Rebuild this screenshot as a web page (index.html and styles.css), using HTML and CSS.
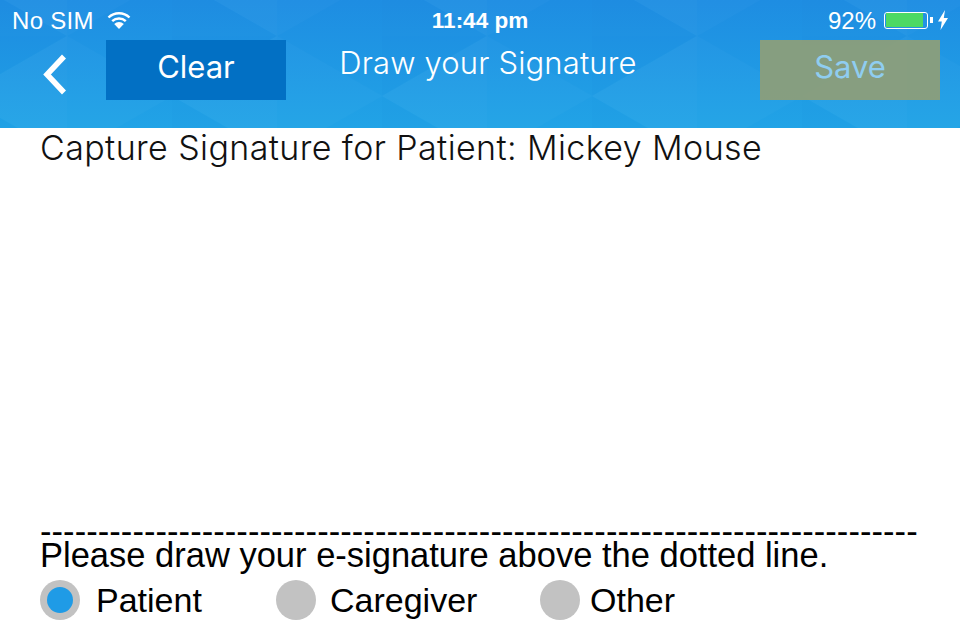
FILE: index.html
```html
<!DOCTYPE html>
<html lang="en">
<head>
	<meta charset="UTF-8">
	<title>Draw your Signature</title>
	<link rel="stylesheet" href="styles.css">
</head>
<body>
	<div id="container">
		<div class="header">
			<svg class="pattern" width="960" height="128" viewBox="0 0 960 128">
				<defs>
					<pattern id="tri" width="210" height="120" patternUnits="userSpaceOnUse" patternTransform="translate(-38 36)">
						<polygon points="105,0 105,120 0,60" fill="#fff" opacity=".03"/>
						<polygon points="105,0 210,60 105,120" fill="#fff" opacity=".018"/>
						<polygon points="0,0 105,0 0,60" fill="#0a5fc0" opacity=".03"/>
						<polygon points="0,60 105,120 0,120" fill="#0a5fc0" opacity=".015"/>
					</pattern>
				</defs>
				<rect width="960" height="128" fill="url(#tri)"/>
			</svg>
			<div class="status">
				<div class="status-left">
					<span class="carrier">No SIM</span>
					<svg class="wifi" width="24" height="18" viewBox="0 0 24 18">
						<path d="M1.500 6.500a15 15 0 0 1 21 0M5.200 10.200a9.800 9.800 0 0 1 13.600 0" fill="none" stroke="#fff" stroke-width="2.400"/>
						<path d="M12 18L7.200 13a7 7 0 0 1 9.600 0z" fill="#fff"/>
					</svg>
				</div>
				<div class="time">11:44 pm</div>
				<div class="status-right">
					<span class="percent">92%</span>
					<div class="battery"><div class="battery-fill"></div></div>
					<div class="battery-nub"></div>
					<svg class="bolt" width="10" height="20" viewBox="0 0 10 20">
						<path d="M7 0L0 11.500h3.800L2.500 20 10 8H5.800z" fill="#fff"/>
					</svg>
				</div>
			</div>
			<div class="nav">
				<svg class="back" width="24" height="41" viewBox="0 0 24 41">
					<path d="M21 2.500L4 20.500l17 18" fill="none" stroke="#fff" stroke-width="5.500"/>
				</svg>
				<div class="btn btn-clear">Clear</div>
				<div class="title">Draw your Signature</div>
				<div class="btn btn-save">Save</div>
			</div>
		</div>
		<div class="content">
			<div class="caption">Capture Signature for Patient: Mickey Mouse</div>
			<div class="sign-area"></div>
			<div class="dots">----------------------------------------------------------------------------</div>
			<div class="hint">Please draw your e-signature above the dotted line.</div>
			<div class="radios">
				<div class="radio-item">
					<div class="radio on"></div>
					<span>Patient</span>
				</div>
				<div class="radio-item mid">
					<div class="radio"></div>
					<span>Caregiver</span>
				</div>
				<div class="radio-item last">
					<div class="radio"></div>
					<span>Other</span>
				</div>
			</div>
		</div>
	</div>
</body>
</html>
```

FILE: styles.css
```css
html, body {
	margin: 0;
	padding: 0;
	background: #fff;
}
#container {
	width: 960px;
	height: 640px;
	overflow: hidden;
	display: flex;
	flex-direction: column;
}
.header {
	position: relative;
	height: 128px;
	flex: none;
	color: #fff;
	background: linear-gradient(#1e8de2, #21a3e6);
	font-family: "Inter", "Liberation Sans", sans-serif;
}
.pattern {
	position: absolute;
	left: 0;
	top: 0;
}
.status {
	position: relative;
	height: 40px;
	display: grid;
	grid-template-columns: 1fr auto 1fr;
	align-items: center;
	padding: 0 12px;
	font-family: "Liberation Sans", sans-serif;
	font-size: 24px;
}
.status-left {
	display: flex;
	align-items: center;
	gap: 13px;
}
.carrier {
	padding-top: 2px;
	letter-spacing: 0.3px;
}
.wifi {
	display: block;
}
.time {
	padding-top: 2px;
	font-weight: bold;
	font-size: 22.500px;
}
.status-right {
	display: flex;
	align-items: center;
	justify-content: flex-end;
}
.percent {
	padding-top: 2px;
	margin-right: 8px;
}
.battery {
	width: 40px;
	height: 14px;
	padding: 0.500px 1px;
	border: 1.500px solid #fff;
	border-radius: 3px;
}
.battery-fill {
	width: 37px;
	height: 14px;
	background: #4cd964;
}
.battery-nub {
	width: 3px;
	height: 6px;
	margin-left: 2px;
	background: #fff;
}
.bolt {
	margin-left: 5px;
}
.nav {
	position: relative;
	height: 60px;
	display: flex;
	padding: 0 20px 0 43px;
}
.back {
	margin: 14px 39px 0 0;
}
.btn {
	width: 180px;
	height: 60px;
	line-height: 54px;
	text-align: center;
	font-size: 31px;
}
.btn-clear {
	background: #0270c4;
}
.btn-save {
	background: rgba(140, 158, 122, 0.95);
	color: #8fcdf0;
}
.title {
	flex: 1;
	padding-right: 70px;
	text-align: center;
	line-height: 46px;
	font-size: 31px;
	font-weight: 300;
	letter-spacing: 0.15px;
}
.content {
	flex: 1;
	display: flex;
	flex-direction: column;
	padding: 0 40px 20px;
	font-family: "Liberation Sans", sans-serif;
	color: #000;
}
.caption {
	font-family: "Inter", "Liberation Sans", sans-serif;
	font-weight: 300;
	font-size: 34px;
	line-height: 40px;
	letter-spacing: 0.4px;
	color: #111;
}
.sign-area {
	flex: 1;
}
.dots {
	font-size: 34.500px;
	line-height: 32px;
	height: 21px;
	letter-spacing: 0.06px;
	white-space: nowrap;
}
.hint {
	font-size: 34.500px;
	line-height: 38px;
}
.radios {
	display: grid;
	grid-template-columns: 236px 264px auto;
	margin-top: 6px;
}
.radio-item {
	display: flex;
	align-items: center;
	gap: 16px;
	font-size: 34px;
}
.radio-item.mid {
	gap: 14px;
}
.radio-item.last {
	gap: 10px;
}
.radio {
	width: 40px;
	height: 40px;
	border-radius: 50%;
	background: #c2c2c2;
	display: flex;
	align-items: center;
	justify-content: center;
}
.radio.on::after {
	content: "";
	width: 26px;
	height: 26px;
	border-radius: 50%;
	background: #1f9be6;
}
```
